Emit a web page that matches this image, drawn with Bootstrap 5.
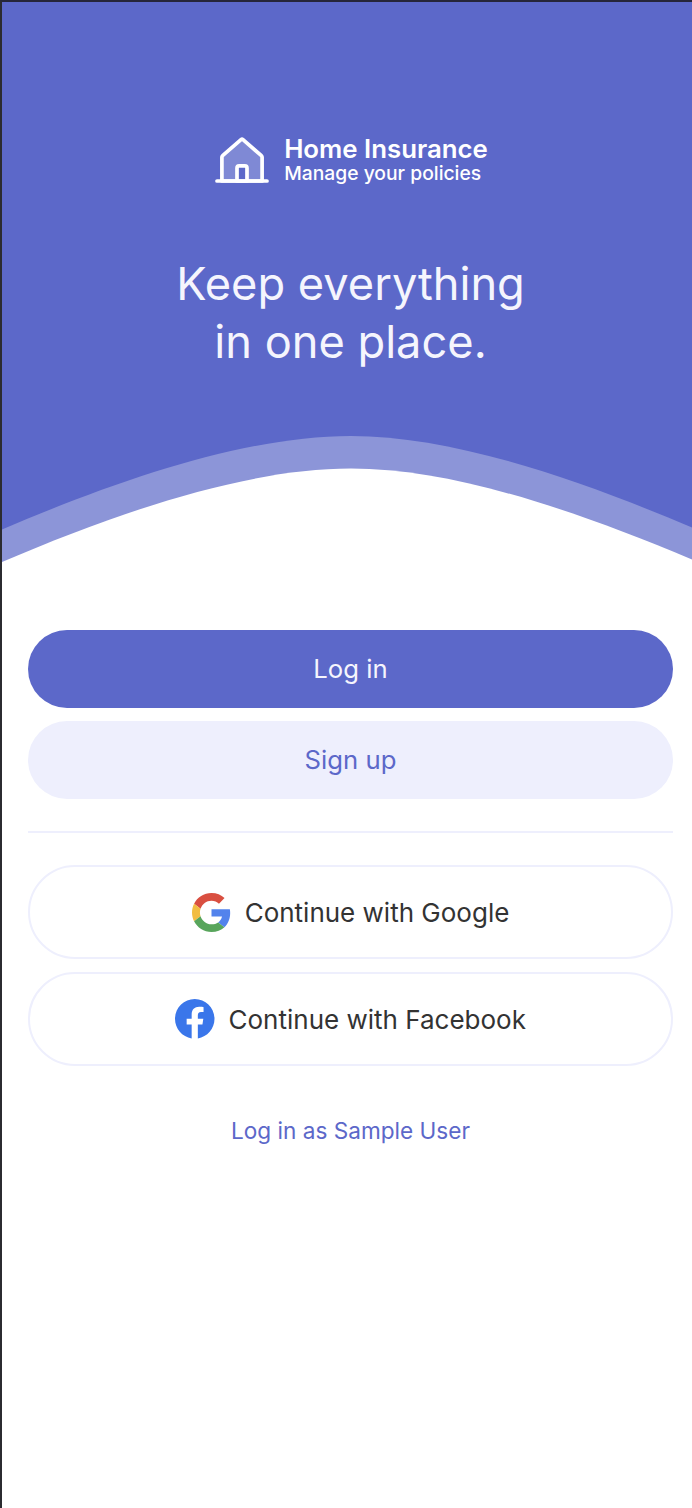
<!DOCTYPE html>
<html lang="en">
<head>
<meta charset="utf-8">
<meta name="viewport" content="width=device-width, initial-scale=1">
<title>Home Insurance</title>
<link href="https://cdn.jsdelivr.net/npm/bootstrap@5.3.0/dist/css/bootstrap.min.css" rel="stylesheet">
<style>
  :root { --indigo: #5c68c9; --lilac: #eeeffd; }
  body { font-family: Inter, "Liberation Sans", sans-serif; color: #333; }
  .screen { height: 1508px; border-left: 2px solid #2b2b30; border-top: 2px solid #26263a; }
  .hero { height: 560px; background: var(--indigo); padding: 131px 0 0 7px; }
  .brand { height: 54px; gap: 15px; padding-left: 2px; }
  .brand-name { font-size: 25.8px; line-height: 27px; font-weight: 600; }
  .brand-note { font-size: 19.3px; line-height: 23px; font-weight: 500; }
  .headline { font-size: 45.2px; line-height: 58px; font-weight: 400; color: #f5f5fd; margin-top: 68px; }
  .wave { left: 0; top: 432px; width: 690px; height: 130px; }
  .actions { padding: 68px 19px 0 26px; }
  .pill { height: 78px; font-size: 25.7px; padding: 0; border: 0; --bs-btn-font-weight: 400; }
  .pill-main { background: var(--indigo); color: #f5f5fd; }
  .pill-soft { background: var(--lilac); color: var(--indigo); }
  .pill-line { height: 94px; border: 2px solid var(--lilac); color: #333; gap: 14px; font-size: 26px; }
  .pill-stack { gap: 13px; }
  .divider { height: 2px; background: var(--lilac); margin: 32px 0; }
  .sample { font-size: 22.6px; line-height: 30px; color: var(--indigo); margin-top: 50px; }
</style>
</head>
<body class="bg-white">
<main class="screen position-relative overflow-hidden">
  <header class="hero text-white text-center">
    <div class="brand d-flex justify-content-center align-items-center">
      <svg width="54" height="48" viewBox="0 0 54 48" fill="none" stroke="#fff" stroke-width="3.7" stroke-linecap="round" stroke-linejoin="round">
        <path d="M6.9 45V21.2Q6.9 20.4 7.6 19.7L26 3.6Q27 2.8 28 3.6L46.4 19.7Q47.1 20.4 47.1 21.2V45Z" fill="#fff" fill-opacity=".22"/>
        <path d="M22 45V32Q22 29.9 24.1 29.9H29.9Q32 29.9 32 32V45Z" fill="#5c68c9"/>
        <path d="M2 45H52"/>
      </svg>
      <div class="text-start">
        <div class="brand-name">Home Insurance</div>
        <div class="brand-note">Manage your policies</div>
      </div>
    </div>
    <h1 class="headline mb-0">Keep everything<br>in one place.</h1>
  </header>
  <svg class="wave position-absolute" viewBox="2 434 690 130" aria-hidden="true">
    <path fill="#8c95d8" d="M2 529.5C118 480 245 436 351 436C450 436 570 476 692 527.5V564H2Z"/>
    <path fill="#fff" d="M2 562C118 512.5 245 468.6 351 468.6C450 468.6 570 508 692 559.5V565H2Z"/>
  </svg>
  <section class="actions">
    <div class="d-grid pill-stack">
      <button class="btn rounded-pill pill pill-main" type="button">Log in</button>
      <button class="btn rounded-pill pill pill-soft" type="button">Sign up</button>
    </div>
    <div class="divider"></div>
    <div class="d-grid pill-stack">
      <button class="btn rounded-pill pill pill-line d-flex justify-content-center align-items-center" type="button">
        <svg width="39" height="39" viewBox="0 0 48 48">
          <path fill="#d94f40" d="M24 9.5c3.54 0 6.71 1.22 9.21 3.6l6.85-6.85C35.9 2.38 30.47 0 24 0 14.62 0 6.51 5.38 2.56 13.22l7.98 6.19C12.43 13.72 17.74 9.5 24 9.5z"/>
          <path fill="#5383ec" d="M46.98 24.55c0-1.57-.15-3.09-.38-4.55H24v9.02h12.94c-.58 2.96-2.26 5.48-4.78 7.18l7.73 6c4.51-4.18 7.09-10.36 7.09-17.65z"/>
          <path fill="#f2bd42" d="M10.53 28.59c-.48-1.45-.76-2.99-.76-4.59s.27-3.14.76-4.59l-7.98-6.19C.92 16.46 0 20.12 0 24c0 3.88.92 7.54 2.56 10.78l7.97-6.19z"/>
          <path fill="#58a55c" d="M24 48c6.48 0 11.93-2.13 15.89-5.81l-7.73-6c-2.15 1.45-4.92 2.3-8.16 2.3-6.26 0-11.57-4.22-13.47-9.91l-7.98 6.19C6.51 42.62 14.62 48 24 48z"/>
        </svg>
        <span>Continue with Google</span>
      </button>
      <button class="btn rounded-pill pill pill-line d-flex justify-content-center align-items-center" type="button">
        <svg width="39.5" height="39.5" viewBox="0 0 24 24">
          <path fill="#3a76ea" d="M24 12.073C24 5.4 18.627 0 12 0S0 5.4 0 12.073C0 18.1 4.388 23.094 10.125 24v-8.437H7.078v-3.49h3.047V9.413c0-3.026 1.792-4.697 4.533-4.697 1.312 0 2.686.236 2.686.236v2.97h-1.513c-1.491 0-1.956.93-1.956 1.886v2.265h3.328l-.532 3.49h-2.796V24C19.612 23.094 24 18.1 24 12.073z"/>
        </svg>
        <span>Continue with Facebook</span>
      </button>
    </div>
    <a class="sample d-block text-center text-decoration-none" href="#">Log in as Sample User</a>
  </section>
</main>
<script src="https://cdn.jsdelivr.net/npm/bootstrap@5.3.0/dist/js/bootstrap.bundle.min.js"></script>
</body>
</html>
